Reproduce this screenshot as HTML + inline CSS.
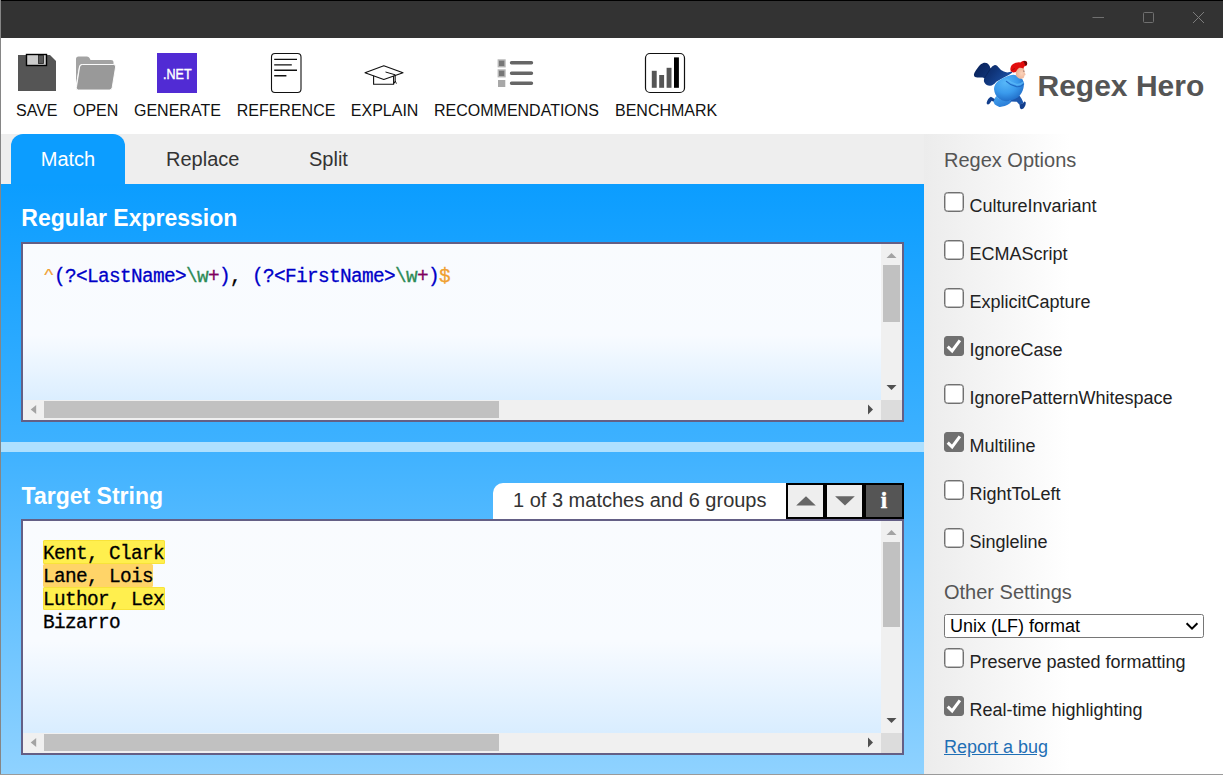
<!DOCTYPE html>
<html>
<head>
<meta charset="utf-8">
<title>Regex Hero</title>
<style>
*{box-sizing:border-box;margin:0;padding:0}
html,body{width:1223px;height:775px;overflow:hidden;background:#fff;font-family:"Liberation Sans",sans-serif;}
.abs{position:absolute}
#win{position:absolute;left:0;top:0;width:1223px;height:775px;overflow:hidden;background:#fff}
#titlebar{left:0;top:0;width:1223px;height:38px;background:#333;border-top:1px solid #000}
#lborder{left:0;top:0;width:1px;height:775px;background:#868686;z-index:50}
#bborder{left:0;top:774px;width:1223px;height:1px;background:#9a9a9a;z-index:50}
#toolbar{left:1px;top:38px;width:1222px;height:96px;background:#fff}
.lbl{position:absolute;top:101px;font-size:16px;color:#111;white-space:nowrap;line-height:20px}
#tabs{left:1px;top:134px;width:923px;height:50px;background:#eee}
.tab{position:absolute;top:0;height:50px;font-size:20px;line-height:50px;color:#333;white-space:nowrap}
#tabmatch{left:10px;width:114px;background:#0c9dff;color:#fff;border-radius:12px 12px 0 0;text-align:center}
#panel1{left:1px;top:184px;width:923px;height:258px;background:linear-gradient(#0b9dff,#3db1ff)}
#divider{left:1px;top:442px;width:923px;height:10px;background:#aee0ff}
#panel2{left:1px;top:452px;width:923px;height:323px;background:linear-gradient(#40b2ff,#8fd2ff)}
h2{position:absolute;font-size:23px;font-weight:bold;color:#fff;white-space:nowrap;line-height:26px}
.box{position:absolute;left:21px;width:883px;border:2px solid #645f85;background:linear-gradient(#f9fbfe 0%,#f8fbff 52%,#d2eaff 100%);overflow:hidden}
.mono{font-family:"Liberation Mono",monospace;font-size:19.4px;letter-spacing:-0.64px;line-height:23px;white-space:pre;position:absolute;-webkit-text-stroke:0.3px}
.vs{position:absolute;right:0;top:0;width:21px;background:#f0f0f0}
.hs{position:absolute;left:0;bottom:0;height:20.5px;background:#f0f0f0}
.corner{position:absolute;right:0;bottom:0;width:21px;height:20.5px;background:#dcdcdc}
.thumb{position:absolute;background:#c1c1c1}
.box svg{position:absolute}
#side{left:924px;top:134px;width:299px;height:641px;background:linear-gradient(90deg,#ececec,#fff 49%)}
.sh{position:absolute;left:944px;font-size:20px;color:#555;white-space:nowrap;line-height:24px}
.opt{position:absolute;left:944px;width:260px;height:22px;font-size:18px;color:#222;white-space:nowrap;line-height:22px}
.cb{position:absolute;left:0;top:0;width:20px;height:20px;border:1px solid #707070;border-radius:3.5px;background:#fff;box-shadow:inset 0 0 0 0.5px #808080}
.cb.on{background:#707070;border-color:#707070;box-shadow:none;border-radius:3px}
.cb svg{position:absolute;left:-1px;top:-1px}
.opt span{position:absolute;left:25.5px;top:3px}
.hlr{position:absolute;background:#ffef4e;border-radius:1.5px;box-shadow:inset 0 0 0 1px rgba(235,205,20,0.35)}
.hlr.o{background:#ffd468;box-shadow:none}
</style>
</head>
<body>
<div id="win">
<div id="titlebar" class="abs">
<svg class="abs" style="left:1073px;top:0" width="150" height="36" viewBox="1073 1 150 36">
<path d="M1092.5 17.5H1104" stroke="#707070" stroke-width="1" fill="none"/>
<rect x="1143.5" y="12.5" width="10" height="10" rx="1" stroke="#707070" stroke-width="1" fill="none"/>
<path d="M1193 12L1204 23M1204 12L1193 23" stroke="#7c7c7c" stroke-width="1" fill="none"/>
</svg>
</div>
<div id="toolbar" class="abs"></div>
<svg class="abs" style="left:0;top:37px" width="1223" height="97" viewBox="0 37 1223 97">
<!-- save -->
<path d="M18 55H50L56 61V91H18Z" fill="#555"/>
<rect x="26.5" y="54.5" width="20" height="11" fill="#ccc" stroke="#000" stroke-width="1.4"/>
<rect x="38.5" y="55.5" width="5" height="8" fill="#555" stroke="#222" stroke-width="0.8"/>
<!-- open -->
<path d="M76 59Q76 56.5 78.5 56.5H87Q88.8 56.5 89.5 58L90.5 60H111Q113.5 60 113.5 62V64H82Q79.5 64 79 66.5L76 84Z" fill="#a3a3a3"/>
<path d="M82.5 64.5H113.5Q116 64.5 115.6 67L112.2 87.5Q111.8 90 109.3 90H78.5Q76 90 76.4 87.5L79.6 67Q80 64.5 82.5 64.5Z" fill="#999" stroke="#fff" stroke-width="0.9"/>
<!-- .net -->
<rect x="157" y="53" width="40" height="40" fill="#512bd4"/>
<text x="163" y="78.6" font-family="Liberation Sans" font-size="14.2" fill="#fff" stroke="#fff" stroke-width="0.45" textLength="28.6" lengthAdjust="spacingAndGlyphs">.NET</text>
<!-- reference -->
<rect x="271.5" y="53.5" width="29.5" height="39" rx="3.5" fill="#fff" stroke="#111" stroke-width="1.1"/>
<path d="M274.2 59.4H297M274.2 64.9H291.8M274.2 70.3H297M274.2 75.7H286.4" stroke="#111" stroke-width="1.4" fill="none"/>
<!-- explain -->
<path d="M365 72.8L383.8 65.8L403 72.8L383.8 79.4Z" fill="none" stroke="#111" stroke-width="1.1" stroke-linejoin="round"/>
<path d="M373.6 75.8V84.2H393.6V75.8" fill="none" stroke="#111" stroke-width="1.1"/>
<path d="M385.5 72L395.2 74.8V81L394 83.6M395.2 81L396.4 83.6" fill="none" stroke="#111" stroke-width="1"/>
<!-- recommendations -->
<rect x="498.3" y="60" width="6.7" height="6.7" fill="#777" stroke="#b5b5b5" stroke-width="1.4"/>
<rect x="498.3" y="70" width="6.7" height="6.7" fill="#777" stroke="#b5b5b5" stroke-width="1.4"/>
<rect x="498" y="80" width="7.3" height="7" fill="#a8a8a8"/>
<path d="M511.5 62.8H531.5M511.5 73.2H531.5M511.5 83.3H531.5" stroke="#666" stroke-width="3.4" stroke-linecap="round" fill="none"/>
<!-- benchmark -->
<rect x="645.5" y="53.5" width="39" height="39" rx="4.5" fill="#fff" stroke="#111" stroke-width="1.2"/>
<rect x="651.8" y="70.8" width="4.9" height="17" fill="#555"/>
<rect x="659.2" y="75" width="4.9" height="12.8" fill="#555"/>
<rect x="666.6" y="67.8" width="4.9" height="20" fill="#555"/>
<rect x="674" y="57.4" width="4.9" height="30.4" fill="#000"/>
</svg>
<div class="lbl" style="left:16px">SAVE</div>
<div class="lbl" style="left:73px">OPEN</div>
<div class="lbl" style="left:134px">GENERATE</div>
<div class="lbl" style="left:236.7px">REFERENCE</div>
<div class="lbl" style="left:350.8px">EXPLAIN</div>
<div class="lbl" style="left:434px">RECOMMENDATIONS</div>
<div class="lbl" style="left:615px">BENCHMARK</div>
<svg class="abs" style="left:960px;top:50px" width="80" height="70" viewBox="0 0 80 70">
<defs>
<linearGradient id="cape" x1="0" y1="0" x2="1" y2="0.5"><stop offset="0" stop-color="#081f55"/><stop offset="0.55" stop-color="#0f3377"/><stop offset="1" stop-color="#1a4fa3"/></linearGradient>
<radialGradient id="body" cx="0.38" cy="0.3" r="0.8"><stop offset="0" stop-color="#58b8f8"/><stop offset="0.5" stop-color="#3a9aec"/><stop offset="1" stop-color="#1a62bf"/></radialGradient>
<linearGradient id="leg" x1="0" y1="0" x2="0.6" y2="1"><stop offset="0" stop-color="#46a6f2"/><stop offset="1" stop-color="#2a7cd6"/></linearGradient>
<radialGradient id="face" cx="0.6" cy="0.55" r="0.7"><stop offset="0" stop-color="#fbd3bb"/><stop offset="1" stop-color="#e9a98a"/></radialGradient>
</defs>
<path d="M52.2 21.6L47.2 22.4Q43.5 21.8 41 20.1Q38.8 17.5 37.1 15.8Q36 15 34.8 15.1Q33.2 15.6 32.1 16.6L30.5 18.5Q30 16.5 29 15.1Q28 13.8 26.6 13.1Q25.2 12.5 23.9 12.7Q22.2 13.2 20.8 14.3Q19 16 17.4 18.2Q15.8 20.2 14.6 22.4Q13.8 24 13.9 25.1Q14.1 26.5 15 27.1Q16.2 27.6 17.7 27.5L22.4 27.5Q23.6 27.6 24.3 28.2Q23.8 29.8 23.9 31.3Q24.4 32.8 25.5 34Q26.7 35.1 28.2 35.6Q30 35.9 31.7 35.6Q33.4 34.8 34.8 33.6L36.3 31.7L42.5 28.2L48.7 25.1L52.2 22.8Z" fill="url(#cape)"/>
<path d="M30.5 18.5Q28 23 24.3 28.2" fill="none" stroke="#081d4e" stroke-width="0.9" opacity="0.6"/>
<path d="M36.3 46L39.4 49.1L51.8 50.7L50.3 53Q47.8 55 44.8 56.1Q42 57 39.4 56.9Q36.6 56 34.8 54.5Q33.7 52.8 33.2 50.7Z" fill="url(#leg)"/>
<path d="M30.9 46.8Q29.3 47.6 28.2 49.1Q27 51 26.6 53Q26.8 54.4 27.8 54.5Q28.9 54.2 29.7 53.4L31.7 50.7L33.4 51.8L34.6 49Q32.6 47.6 30.9 46.8Z" fill="#123e8c"/>
<path d="M59.5 45.5L61.6 48.8L63.6 53L59.5 54.8L56.8 51.8L50 51.5L52 48Z" fill="#1c57ad"/>
<path d="M63.4 53L64.2 51.5Q65.1 51.6 65.7 52.2Q65.9 53.8 65.4 55.3Q64.6 57 63.4 58.4Q62.2 59.2 61.1 59.2Q60.2 58.6 59.9 57.6L59.5 54.5Z" fill="#123e8c"/>
<path d="M34 39.1Q34.1 36.5 35.2 34.4Q36.3 32.6 37.9 31.3L42.5 28.2L47.2 26.3Q50.5 24.6 53.4 24.7Q56 25 58 26.3Q60.8 27.6 62.6 29.4Q63.7 31.4 63.8 33.6Q64 36 63.4 38.3Q62.8 40.8 61.5 42.9Q60 45.4 58 47.2Q55.2 49.3 51.8 50.3Q48.2 51.3 44.8 51.1Q41.8 50.6 39.4 49.1Q36.9 47.2 35.5 44.5Q34.2 41.8 34 39.1Z" fill="url(#body)"/>
<path d="M46.4 31.3Q50.3 35.2 56.5 36.7Q61.1 37.2 63.6 34" fill="none" stroke="#1f6ac4" stroke-width="1.2" stroke-linecap="round"/>
<path d="M47 29.5Q51 33 56.5 34.6Q60.5 35 62.8 32.6" fill="none" stroke="#5ab8f8" stroke-width="1.6" stroke-linecap="round" opacity="0.8"/>
<path d="M55.7 21Q56 18 58.5 17.2Q62 16.5 64 18.4Q64.6 20.5 64.6 22.5Q65.7 23.8 65.4 24.9Q64.8 25.6 64.2 25.6Q64.6 27 63.6 28Q61.5 29.2 59 28.4Q56.6 27.4 56 25Q55.6 23 55.7 21Z" fill="url(#face)"/>
<path d="M63.2 21L64.4 21.3" stroke="#5a3a3a" stroke-width="0.8" fill="none"/>
<path d="M50.3 18.9Q50.6 16.6 51.8 15.1Q53.4 13.4 55.7 12.7Q58 12.2 60.3 12.4Q62.2 11.2 64.2 10.8Q66 10.9 66.9 12Q67.4 13.6 66.9 15.1Q65.8 16.2 64.2 16.6L63.4 18.5Q61.5 17.6 59.5 17.8Q58.2 18.5 57.2 19.7L55.7 22Q54.6 22.5 53.4 22.4Q52 22.1 51 21.3Q50.3 20.2 50.3 18.9Z" fill="#e20d0d"/>
<path d="M63.2 11Q65.8 10.8 66.9 12Q67.4 13.6 66.9 15.1Q66 15.9 65 15Q64.6 13 63.2 11Z" fill="#6a0808"/>
<path d="M51 21.3Q52.5 19 55 18.6" fill="none" stroke="#a30808" stroke-width="0.8"/>
</svg>
<div class="abs" style="left:1037.5px;top:68.5px;font-size:30px;font-weight:bold;color:#555;white-space:nowrap;line-height:34px">Regex Hero</div>
<div id="tabs" class="abs">
  <div class="tab" id="tabmatch">Match</div>
  <div class="tab" style="left:165px">Replace</div>
  <div class="tab" style="left:308px">Split</div>
</div>
<div id="panel1" class="abs"></div>
<h2 style="left:21.3px;top:204.5px">Regular Expression</h2>
<div class="box" style="top:242px;height:180px">
<div class="mono" style="left:20px;top:21.5px"><span style="color:#f0a030;display:inline-block;transform:scale(0.95,0.62);transform-origin:50% 28%">^</span><span style="color:#0000c8">(?&lt;LastName&gt;</span><span style="color:#2e8b57">\w</span><span style="color:#800060">+</span><span style="color:#0000c8">)</span><span style="color:#000">, </span><span style="color:#0000c8">(?&lt;FirstName&gt;</span><span style="color:#2e8b57">\w</span><span style="color:#800060">+</span><span style="color:#0000c8">)</span><span style="color:#f0a030">$</span></div>
<div class="vs" style="height:155.5px"></div><div class="hs" style="width:858px"></div><div class="corner"></div><div class="thumb" style="left:860px;top:21px;width:17px;height:57px"></div><div class="thumb" style="left:21px;top:157px;width:455px;height:17px"></div><svg style="left:858px;top:0" width="21" height="21" viewBox="0 0 21 21"><path d="M5.5 14L10.5 9L15.5 14Z" fill="#a3a3a3"/></svg><svg style="left:858px;top:133px" width="21" height="21" viewBox="0 0 21 21"><path d="M5.5 8L10.5 13L15.5 8Z" fill="#505050"/></svg><svg style="left:0;top:155px" width="21" height="21" viewBox="0 0 21 21"><path d="M13.2 6L7.7 10.5L13.2 15Z" fill="#a3a3a3"/></svg><svg style="left:837px;top:155px" width="21" height="21" viewBox="0 0 21 21"><path d="M8 5.5L13 10.5L8 15.5Z" fill="#505050"/></svg></div>
<div id="divider" class="abs"></div>
<div id="panel2" class="abs"></div>
<h2 style="left:21.6px;top:483.4px">Target String</h2>
<div class="abs" style="left:493px;top:483px;width:293px;height:36px;background:#fff;border-radius:10px 0 0 0;font-size:20px;line-height:34px;color:#333;padding-left:20px;white-space:nowrap">1 of 3 matches and 6 groups</div>
<div class="abs" style="left:786px;top:483px;width:39px;height:36px;border:2px solid #000;background:#eee"></div>
<div class="abs" style="left:825px;top:483px;width:39px;height:36px;border:2px solid #000;background:#eee"></div>
<div class="abs" style="left:864px;top:483px;width:40px;height:36px;border:2px solid #000;background:#555"></div>
<svg class="abs" style="left:786px;top:483px" width="118" height="36" viewBox="786 483 118 36">
<path d="M796.2 505.6L806 496.2L815.8 505.6Z" fill="#666"/>
<path d="M835.1 496.2H854.8L845 505.6Z" fill="#666"/>
<text x="884" y="508.2" text-anchor="middle" font-family="Liberation Serif" font-weight="bold" font-size="23" fill="#fff" stroke="#fff" stroke-width="0.5">i</text>
</svg>
<div class="box" style="top:519px;height:236px">
<div class="hlr" style="left:19.5px;top:19.2px;width:122.1px;height:23.8px"></div>
<div class="hlr" style="left:19.5px;top:66px;width:122.1px;height:23.3px"></div>
<div class="hlr o" style="left:19.5px;top:42.8px;width:110.8px;height:23.4px"></div>
<div class="mono" style="left:20px;top:21.5px;color:#000">Kent, Clark
Lane, Lois
Luthor, Lex
Bizarro</div>
<div class="vs" style="height:211.5px"></div><div class="hs" style="width:858px"></div><div class="corner"></div><div class="thumb" style="left:860px;top:21px;width:17px;height:85px"></div><div class="thumb" style="left:21px;top:213px;width:455px;height:17px"></div><svg style="left:858px;top:0" width="21" height="21" viewBox="0 0 21 21"><path d="M5.5 14L10.5 9L15.5 14Z" fill="#a3a3a3"/></svg><svg style="left:858px;top:189px" width="21" height="21" viewBox="0 0 21 21"><path d="M5.5 8L10.5 13L15.5 8Z" fill="#505050"/></svg><svg style="left:0;top:211px" width="21" height="21" viewBox="0 0 21 21"><path d="M13.2 6L7.7 10.5L13.2 15Z" fill="#a3a3a3"/></svg><svg style="left:837px;top:211px" width="21" height="21" viewBox="0 0 21 21"><path d="M8 5.5L13 10.5L8 15.5Z" fill="#505050"/></svg></div>
<div id="side" class="abs"></div>
<div class="sh" style="top:148px">Regex Options</div>
<div class="opt" style="top:192px"><div class="cb"></div><span>CultureInvariant</span></div>
<div class="opt" style="top:240px"><div class="cb"></div><span>ECMAScript</span></div>
<div class="opt" style="top:288px"><div class="cb"></div><span>ExplicitCapture</span></div>
<div class="opt" style="top:336px"><div class="cb on"><svg width="20" height="20" viewBox="0 0 20 20"><path d="M3.7 10.7L8.1 14.9L15.9 4.3" fill="none" stroke="#fff" stroke-width="3" stroke-linecap="butt" stroke-linejoin="miter"/></svg></div><span>IgnoreCase</span></div>
<div class="opt" style="top:384px"><div class="cb"></div><span>IgnorePatternWhitespace</span></div>
<div class="opt" style="top:432px"><div class="cb on"><svg width="20" height="20" viewBox="0 0 20 20"><path d="M3.7 10.7L8.1 14.9L15.9 4.3" fill="none" stroke="#fff" stroke-width="3" stroke-linecap="butt" stroke-linejoin="miter"/></svg></div><span>Multiline</span></div>
<div class="opt" style="top:480px"><div class="cb"></div><span>RightToLeft</span></div>
<div class="opt" style="top:528px"><div class="cb"></div><span>Singleline</span></div>
<div class="opt" style="top:648px"><div class="cb"></div><span>Preserve pasted formatting</span></div>
<div class="opt" style="top:696px"><div class="cb on"><svg width="20" height="20" viewBox="0 0 20 20"><path d="M3.7 10.7L8.1 14.9L15.9 4.3" fill="none" stroke="#fff" stroke-width="3" stroke-linecap="butt" stroke-linejoin="miter"/></svg></div><span>Real-time highlighting</span></div>
<div class="sh" style="top:580px">Other Settings</div>
<div class="abs" style="left:944px;top:614px;width:260px;height:24px;border:1px solid #767676;border-radius:2.5px;background:#fff;font-size:18px;line-height:22px;color:#000;padding-left:5px;white-space:nowrap">Unix (LF) format</div>
<svg class="abs" style="left:1184px;top:619px" width="16" height="14" viewBox="0 0 16 14"><path d="M2.6 4.2L8 9.6L13.4 4.2" fill="none" stroke="#000" stroke-width="2"/></svg>
<div class="abs" style="left:944px;top:736px;font-size:18px;line-height:22px;color:#1f6fb5;text-decoration:underline;white-space:nowrap">Report a bug</div>
<div id="lborder" class="abs"></div>
<div id="bborder" class="abs"></div>
</div>
</body>
</html>
